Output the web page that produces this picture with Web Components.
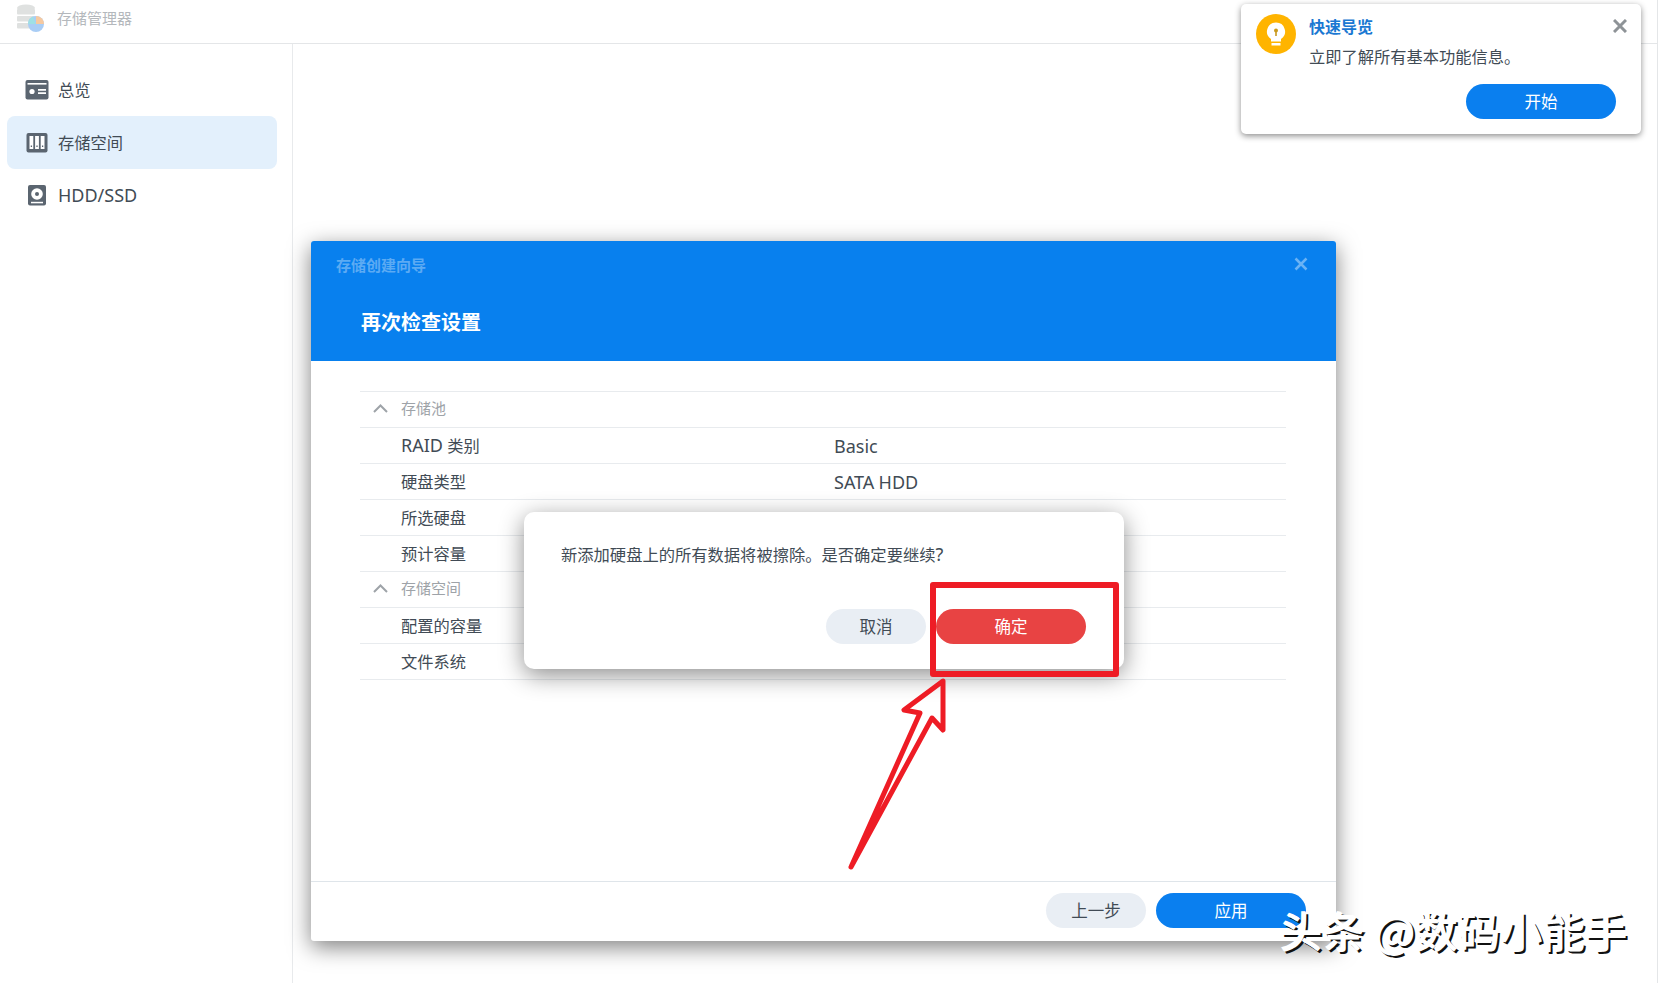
<!DOCTYPE html>
<html lang="zh-CN">
<head>
<meta charset="utf-8">
<title>存储管理器</title>
<style>
  html, body { margin: 0; height: 100%; overflow: hidden; background: #fff; }
  body { font-family: "Noto Sans", "Noto Sans CJK SC", sans-serif; color: #414b55; }
</style>
</head>
<body>
<dsm-app>
  <nav-item slot="nav" label="总览">
    <svg slot="icon" width="24" height="20" viewBox="0 0 24 20"><rect width="23" height="19.5" x=".5" rx="2" fill="#5b6570"/><rect x="2.5" y="3" width="19" height="1.6" fill="#fff"/><circle cx="7" cy="11.5" r="2.6" fill="#fff"/><path d="M13 9.8h8M13 13.2h8" stroke="#fff" stroke-width="1.7"/></svg>
  </nav-item>
  <nav-item slot="nav" label="存储空间" active>
    <svg slot="icon" width="24" height="20" viewBox="0 0 24 20"><rect x="1.500" width="21" height="19.500" rx="2" fill="#5b6570"/><path d="M4.500 3h3.800v13H4.500zM10.100 3h3.800v13h-3.800zM15.700 3h3.800v13h-3.800z" fill="#fff"/><path d="M6.400 12.500v1.600M12 12.500v1.600M17.600 12.500v1.600" stroke="#5b6570" stroke-width="1.300"/></svg>
  </nav-item>
  <nav-item slot="nav" label="HDD/SSD">
    <svg slot="icon" width="24" height="21" viewBox="0 0 24 21"><rect x="3" width="18" height="20.500" rx="2" fill="#5b6570"/><circle cx="12" cy="9" r="5.800" fill="#fff"/><circle cx="12" cy="9" r="2" fill="#5b6570"/><rect x="6" y="16.800" width="12" height="1.500" fill="#fff"/></svg>
  </nav-item>
</dsm-app>

<wizard-window heading="存储创建向导" step="再次检查设置">
  <wizard-section label="存储池"></wizard-section>
  <wizard-row label="RAID 类别" value="Basic"></wizard-row>
  <wizard-row label="硬盘类型" value="SATA HDD"></wizard-row>
  <wizard-row label="所选硬盘" value="硬盘 1"></wizard-row>
  <wizard-row label="预计容量" value=""></wizard-row>
  <wizard-section label="存储空间"></wizard-section>
  <wizard-row label="配置的容量" value=""></wizard-row>
  <wizard-row label="文件系统" value=""></wizard-row>
  <pill-button slot="footer" kind="plain" style="width:100px">上一步</pill-button>
  <pill-button slot="footer" kind="primary" style="width:150px">应用</pill-button>
</wizard-window>

<confirm-dialog message="新添加硬盘上的所有数据将被擦除。是否确定要继续?">
  <pill-button kind="plain" style="width:100px">取消</pill-button>
  <pill-button kind="danger" style="width:150px">确定</pill-button>
</confirm-dialog>

<quick-toast heading="快速导览" message="立即了解所有基本功能信息。" action="开始"></quick-toast>
<red-annotation></red-annotation>
<water-mark>头条 @数码小能手</water-mark>

<script>
// latin runs sit in a larger size next to the CJK text
const latin = (text) => text.replace(/[A-Za-z0-9\/?]+/g, (m) => `<span class="l">${m}</span>`);

class DsmApp extends HTMLElement {
    connectedCallback() {
        this.attachShadow({ mode: 'open' });
        this.shadowRoot.innerHTML = `
            <style>
                :host { display: flex; flex-direction: column; height: 983px; box-sizing: border-box; border-right: 1px solid #e4e6e8; }
                header { display: flex; align-items: center; gap: 12px; height: 44px; padding: 0 0 8px 16px; box-sizing: border-box; border-bottom: 1px solid #e4e6e8; flex: none; }
                .name { font-size: 15px; color: #b4b8bc; }
                .main { display: flex; flex: 1; }
                aside { width: 293px; box-sizing: border-box; padding: 19px 15px 0 7px; border-right: 1px solid #e8eaec; flex: none; }
            </style>
            <header>
                <svg width="29" height="28" viewBox="0 0 29 28">
                    <g fill="#dfe1e0"><ellipse cx="10" cy="4" rx="9" ry="3.500"/><rect x="1" y="5" width="18" height="5.500" rx="1"/><rect x="1" y="12" width="18" height="5.500" rx="1"/><rect x="1" y="19" width="18" height="5.500" rx="1"/></g>
                    <circle cx="20" cy="20" r="8" fill="#a9cdf5"/>
                    <path d="M20 20V12a8 8 0 0 1 8 8z" fill="#f6c9a0"/>
                    <path d="M20 20h-8a8 8 0 0 1 5-7.400z" fill="#9fe0e4"/>
                </svg>
                <span class="name">存储管理器</span>
            </header>
            <div class="main"><aside><slot name="nav"></slot></aside></div>
        `;
    }
}

class NavItem extends HTMLElement {
    connectedCallback() {
        this.attachShadow({ mode: 'open' });
        this.shadowRoot.innerHTML = `
            <style>
                :host { display: flex; align-items: center; height: 53px; padding-left: 18px; gap: 6px; border-radius: 8px; font-size: 16.250px; color: #414b55; }
                :host([active]) { background: #e3f0fc; }
                .icon { display: flex; width: 27px; }
                .t { padding-bottom: 2px; }
                .l { font-size: 18px; }
            </style>
            <span class="icon"><slot name="icon"></slot></span>
            <span class="t">${latin(this.getAttribute('label'))}</span>
        `;
    }
}

class PillButton extends HTMLElement {
    connectedCallback() {
        this.attachShadow({ mode: 'open' });
        this.shadowRoot.innerHTML = `
            <style>
                :host { display: flex; align-items: center; justify-content: center; height: 35px; box-sizing: border-box; padding-bottom: 2px; border-radius: 18px; font-size: 16.500px; background: #e9eef4; color: #414b55; flex: none; }
                :host([kind="primary"]) { background: #0a7fef; color: #fff; }
                :host([kind="danger"]) { background: #e84343; color: #fff; }
            </style>
            <slot></slot>
        `;
    }
}

class WizardSection extends HTMLElement {
    connectedCallback() {
        this.attachShadow({ mode: 'open' });
        this.shadowRoot.innerHTML = `
            <style>
                :host { display: flex; align-items: center; height: 36px; box-sizing: border-box; border-bottom: 1px solid #e8ebee; font-size: 15px; color: #9ea3a8; padding: 0 0 3px 13px; gap: 13px; }
                span { padding-bottom: 1px; }
            </style>
            <svg width="15" height="9" viewBox="0 0 15 9"><path d="M1 8l6.500-6.500L14 8" fill="none" stroke="#9ea3a8" stroke-width="2"/></svg>
            <span>${this.getAttribute('label')}</span>
        `;
    }
}

class WizardRow extends HTMLElement {
    connectedCallback() {
        this.attachShadow({ mode: 'open' });
        this.shadowRoot.innerHTML = `
            <style>
                :host { display: flex; align-items: center; height: 36px; box-sizing: border-box; border-bottom: 1px solid #e8ebee; font-size: 16.250px; color: #414b55; padding: 0 0 1px 41px; }
                .label { width: 433px; flex: none; }
                .value { padding-top: 3px; }
                .l { font-size: 18px; line-height: 20px; }
            </style>
            <span class="label">${latin(this.getAttribute('label'))}</span>
            <span class="value">${latin(this.getAttribute('value'))}</span>
        `;
    }
}

class WizardWindow extends HTMLElement {
    connectedCallback() {
        this.attachShadow({ mode: 'open' });
        this.shadowRoot.innerHTML = `
            <style>
                :host { position: absolute; left: 311px; top: 241px; width: 1025px; height: 700px; display: flex; flex-direction: column; background: #fff; border-radius: 3px; box-shadow: 0 6px 22px rgba(0,0,0,.5); }
                .head { height: 120px; flex: none; box-sizing: border-box; background: #0880ee; border-radius: 3px 3px 0 0; padding: 12px 28px 0 25px; color: #fff; }
                .top { display: flex; justify-content: space-between; align-items: center; height: 22px; font-size: 15px; font-weight: 700; color: rgba(255,255,255,.35); }
                h2 { margin: 33px 0 0 25px; font-size: 20px; line-height: 30px; font-weight: 700; }
                .body { flex: 1; padding: 30px 50px 0 49px; }
                .table { border-top: 1px solid #e8ebee; }
                .foot { height: 60px; flex: none; box-sizing: border-box; border-top: 1px solid #dfe5ea; display: flex; justify-content: flex-end; align-items: flex-start; padding: 11px 30px 0 0; gap: 10px; }
            </style>
            <div class="head">
                <div class="top">
                    <span>${this.getAttribute('heading')}</span>
                    <svg width="14" height="14" viewBox="0 0 14 14"><path d="M1.500 1.500l11 11M12.500 1.500l-11 11" stroke="rgba(255,255,255,.4)" stroke-width="2.500"/></svg>
                </div>
                <h2>${this.getAttribute('step')}</h2>
            </div>
            <div class="body"><div class="table"><slot></slot></div></div>
            <div class="foot"><slot name="footer"></slot></div>
        `;
    }
}

class ConfirmDialog extends HTMLElement {
    connectedCallback() {
        this.attachShadow({ mode: 'open' });
        this.shadowRoot.innerHTML = `
            <style>
                :host { position: absolute; left: 524px; top: 512px; width: 600px; height: 157px; box-sizing: border-box; padding: 31px 38px 0 37px; background: #fff; border-radius: 10px; box-shadow: 0 6px 24px rgba(0,0,0,.45); }
                p { margin: 0; font-size: 16.300px; line-height: 24px; color: #414b55; }
                .l { font-size: 18px; line-height: 20px; }
                .actions { display: flex; justify-content: flex-end; gap: 10px; margin-top: 42px; }
            </style>
            <p>${latin(this.getAttribute('message'))}</p>
            <div class="actions"><slot></slot></div>
        `;
    }
}

class QuickToast extends HTMLElement {
    connectedCallback() {
        this.attachShadow({ mode: 'open' });
        this.shadowRoot.innerHTML = `
            <style>
                :host { position: absolute; left: 1241px; top: 4px; width: 400px; height: 130px; box-sizing: border-box; padding: 10px 25px 0 15px; display: flex; gap: 13px; background: #fff; border-radius: 5px; box-shadow: 0 2px 6px rgba(0,0,0,.45); }
                .bulb { flex: none; }
                .text { flex: 1; }
                .title { display: flex; justify-content: space-between; align-items: center; height: 24px; font-size: 16px; font-weight: 700; color: #1a78d2; }
                .title svg { margin-right: -11px; }
                .msg { font-size: 16.250px; line-height: 24px; margin-top: 7px; color: #414b55; }
                .row { display: flex; justify-content: flex-end; margin-top: 15px; }
                .go { display: flex; align-items: center; justify-content: center; width: 150px; height: 35px; box-sizing: border-box; padding-bottom: 2px; border-radius: 18px; background: #0a7fef; color: #fff; font-size: 16.500px; }
            </style>
            <svg class="bulb" width="40" height="40" viewBox="0 0 40 40">
                <circle cx="20" cy="20" r="20" fill="#ffb400"/>
                <path d="M20 8.500a9 9 0 0 0-5 16.500v2.500h10V25a9 9 0 0 0-5-16.500z" fill="#fff"/>
                <rect x="15.500" y="29" width="9" height="2.500" fill="#fff"/>
                <circle cx="20" cy="16.500" r="2" fill="#c99a1e"/><rect x="19.200" y="17" width="1.600" height="5" fill="#c99a1e"/>
            </svg>
            <div class="text">
                <div class="title">
                    <span>${this.getAttribute('heading')}</span>
                    <svg width="14" height="14" viewBox="0 0 14 14"><path d="M1 1l12 12M13 1L1 13" stroke="#8e9397" stroke-width="3"/></svg>
                </div>
                <div class="msg">${this.getAttribute('message')}</div>
                <div class="row"><span class="go">${this.getAttribute('action')}</span></div>
            </div>
        `;
    }
}

class RedAnnotation extends HTMLElement {
    connectedCallback() {
        this.attachShadow({ mode: 'open' });
        this.shadowRoot.innerHTML = `
            <style>
                :host { position: absolute; left: 0; top: 0; width: 1658px; height: 983px; pointer-events: none; }
                svg { display: block; }
            </style>
            <svg width="1658" height="983" viewBox="0 0 1658 983" fill="none" stroke="#ee1c25">
                <rect x="933" y="585" width="183" height="89" stroke-width="6" stroke-linejoin="round"/>
                <path d="M943 681L904 710L920 713L851 867L932 718L943 730Z" stroke-width="5" stroke-linejoin="round"/>
            </svg>
        `;
    }
}

class WaterMark extends HTMLElement {
    connectedCallback() {
        this.attachShadow({ mode: 'open' });
        this.shadowRoot.innerHTML = `
            <style>
                :host { position: absolute; left: 1280px; top: 900px; font-size: 42.400px; font-weight: 500; line-height: 60px; white-space: nowrap; color: #fff; text-shadow: -1px -1px 0 #fff, 2px 2px 0 #111; font-family: "Noto Sans CJK SC", "Noto Sans", sans-serif; }
            </style>
            <slot></slot>
        `;
    }
}

customElements.define('dsm-app', DsmApp);
customElements.define('nav-item', NavItem);
customElements.define('pill-button', PillButton);
customElements.define('wizard-section', WizardSection);
customElements.define('wizard-row', WizardRow);
customElements.define('wizard-window', WizardWindow);
customElements.define('confirm-dialog', ConfirmDialog);
customElements.define('quick-toast', QuickToast);
customElements.define('red-annotation', RedAnnotation);
customElements.define('water-mark', WaterMark);
</script>
</body>
</html>
